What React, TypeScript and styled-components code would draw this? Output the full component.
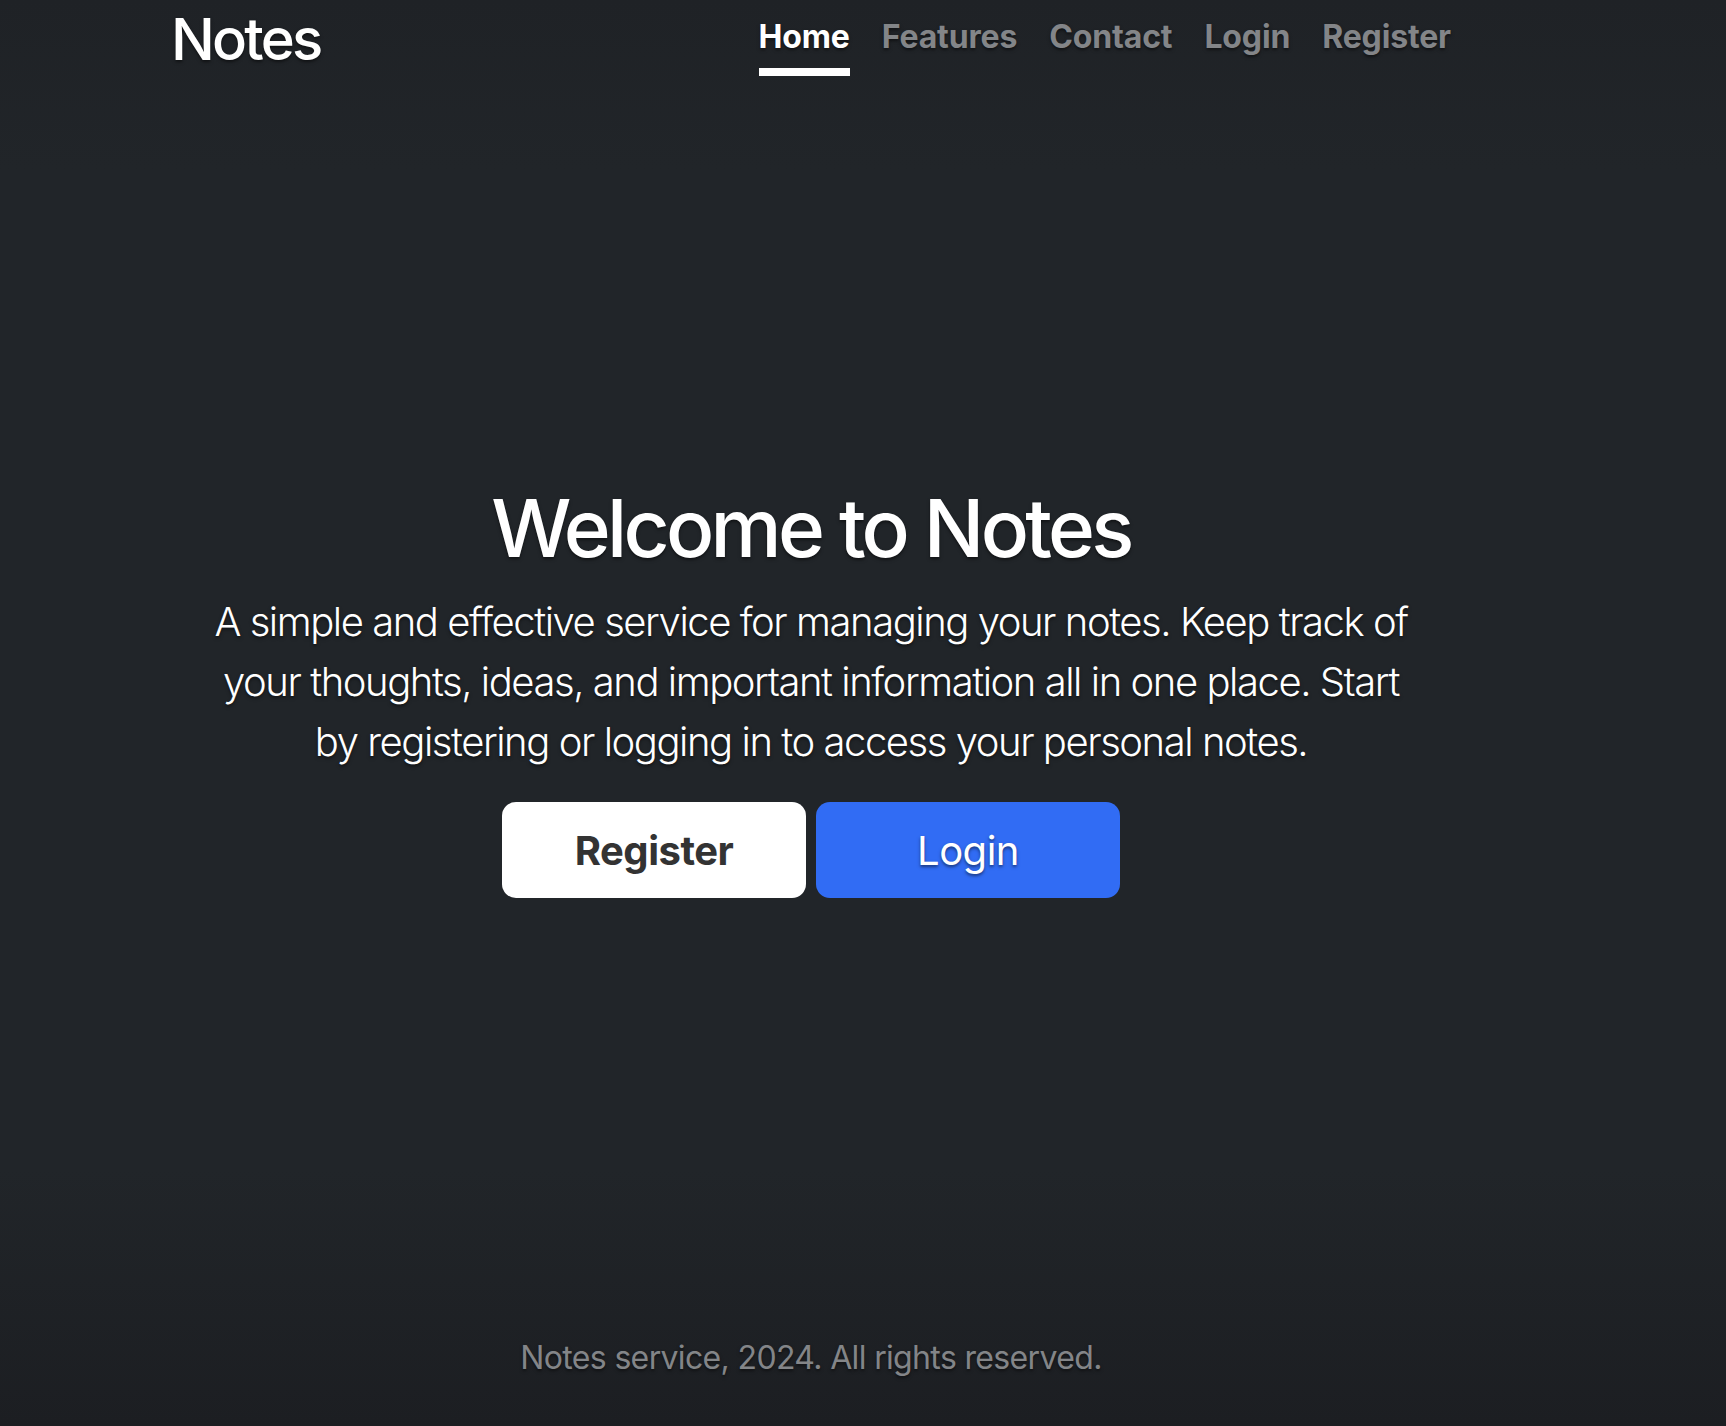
import React from 'react'
import styled, { createGlobalStyle } from 'styled-components'

const GlobalStyle = createGlobalStyle`
  html, body {
    margin: 0;
    padding: 0;
    background: #212529;
  }
  body {
    font-family: Inter, "Noto Sans", "Liberation Sans", sans-serif;
    color: #fff;
    text-shadow: 0 1.6px 3.2px rgba(0, 0, 0, 0.5);
  }
  * {
    box-sizing: border-box;
  }
`

const Page = styled.div`
  min-height: 1426px;
  background: linear-gradient(
    to bottom,
    #1f2226 0%,
    #212529 12%,
    #212529 82%,
    #1c1e22 100%
  );
`

const Cover = styled.div`
  width: 1622px;
  min-height: 1426px;
  display: flex;
  flex-direction: column;
`

const Container = styled.div`
  width: 100%;
  max-width: 1344px;
  margin: 0 auto;
  padding: 0 32px;
`

const Header = styled.header`
  display: flex;
  justify-content: space-between;
  align-items: flex-start;
  padding-top: 5px;
`

const Brand = styled.h3`
  margin: 0;
  font-size: 58px;
  font-weight: 500;
  line-height: 1.2;
  letter-spacing: -2.8px;
`

const Nav = styled.nav`
  display: flex;
  gap: 32px;
  margin-top: 4px;
`

const NavLink = styled.a<{ $active?: boolean }>`
  display: block;
  padding: 4px 0 7px;
  font-size: 32px;
  font-weight: 700;
  line-height: 48px;
  letter-spacing: -0.15px;
  color: ${(p) => (p.$active ? '#fff' : '#838588')};
  border-bottom: 8px solid ${(p) => (p.$active ? '#fff' : 'transparent')};
  text-decoration: none;
  cursor: pointer;
`

const Main = styled.main`
  flex: 1;
  display: flex;
  flex-direction: column;
  justify-content: center;
  align-items: center;
  text-align: center;
  padding-bottom: 32px;
`

const Title = styled.h1`
  margin: 0 0 16px;
  font-size: 80px;
  font-weight: 500;
  line-height: 1.2;
  letter-spacing: -3.7px;
`

const Lead = styled.p`
  margin: 0 0 30px;
  font-size: 40px;
  font-weight: 300;
  line-height: 60px;
  letter-spacing: -1.45px;
`

const Actions = styled.div`
  display: flex;
  justify-content: center;
  gap: 10px;
`

const Button = styled.a<{ $variant: 'light' | 'primary' }>`
  display: flex;
  align-items: center;
  justify-content: center;
  width: 304px;
  height: 96px;
  border-radius: 14px;
  font-size: 40px;
  letter-spacing: -0.5px;
  text-decoration: none;
  cursor: pointer;
  background: ${(p) => (p.$variant === 'light' ? '#fff' : '#316cf4')};
  color: ${(p) => (p.$variant === 'light' ? '#333' : '#fff')};
  font-weight: ${(p) => (p.$variant === 'light' ? 700 : 400)};
  text-shadow: ${(p) => (p.$variant === 'light' ? 'none' : '0 1.6px 3.2px rgba(0, 0, 0, 0.5)')};
`

const Footer = styled.footer`
  margin-bottom: 44px;
  text-align: center;
  font-size: 32px;
  line-height: 48px;
  letter-spacing: -0.65px;
  color: #838588;
`

const links = ['Home', 'Features', 'Contact', 'Login', 'Register']

export default function App() {
  return (
    <Page>
      <GlobalStyle />
      <Cover>
        <Container>
          <Header>
            <Brand>Notes</Brand>
            <Nav>
              {links.map((l) => (
                <NavLink key={l} $active={l === 'Home'}>
                  {l}
                </NavLink>
              ))}
            </Nav>
          </Header>
        </Container>
        <Main>
          <Container>
            <Title>Welcome to Notes</Title>
            <Lead>
              A simple and effective service for managing your notes. Keep track of
              <br />
              your thoughts, ideas, and important information all in one place. Start
              <br />
              by registering or logging in to access your personal notes.
            </Lead>
            <Actions>
              <Button $variant="light">Register</Button>
              <Button $variant="primary">Login</Button>
            </Actions>
          </Container>
        </Main>
        <Footer>Notes service, 2024. All rights reserved.</Footer>
      </Cover>
    </Page>
  )
}
